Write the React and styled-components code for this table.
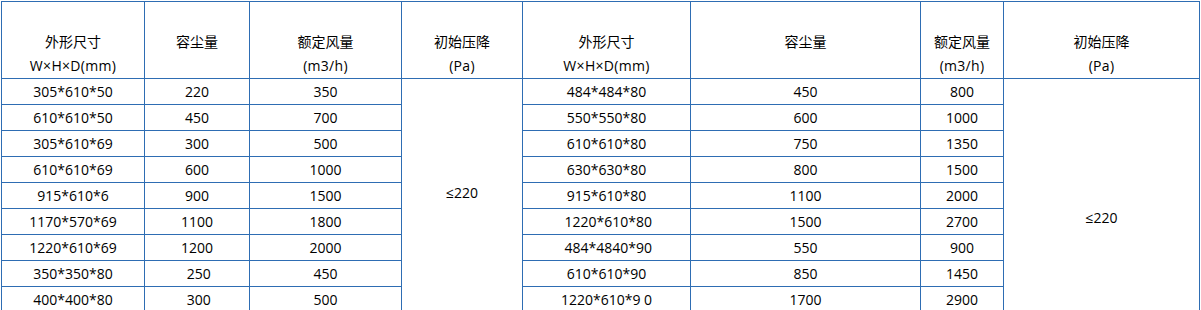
import React from "react";
import styled, { createGlobalStyle } from "styled-components";

const Global = createGlobalStyle`
  html, body { margin: 0; padding: 0; background: #fff; }
  body { font-family: "Open Sans", "Noto Sans CJK SC", sans-serif; }
`;

const LINE = "#2e6db3";

const Table = styled.table`
  margin: 1px 0 0 1px;
  border-collapse: separate;
  border-spacing: 0;
  table-layout: fixed;
  width: 1199px;
  border-left: 1px solid ${LINE};
  border-top: 1px solid ${LINE};
  color: #000;
  font-size: 14px;
`;

const Head = styled.th`
  box-sizing: border-box;
  width: ${(p) => p.$w}px;
  height: 76px;
  padding: 27px 0 0;
  vertical-align: top;
  text-align: center;
  font-weight: normal;
  line-height: 24px;
  border-right: 1px solid ${LINE};
  border-bottom: 1px solid ${LINE};
`;

const Zh = styled.span`
  font-family: "Noto Sans CJK SC", sans-serif;
  font-size: 14px;
`;

const Unit = styled.span`
  letter-spacing: 0.3px;
`;

const Cell = styled.td`
  box-sizing: border-box;
  height: 26px;
  padding: 0;
  text-align: center;
  vertical-align: middle;
  line-height: 25px;
  white-space: pre;
  border-right: 1px solid ${LINE};
  border-bottom: 1px solid ${LINE};
`;

const Merged = styled(Cell)`
  padding: ${(p) => p.$pad};
`;

const heads = [
  { w: 143, zh: "外形尺寸", en: "W×H×D(mm)" },
  { w: 105, zh: "容尘量" },
  { w: 152, zh: "额定风量", en: "(m3/h)" },
  { w: 121, zh: "初始压降", en: "(Pa)" },
  { w: 168, zh: "外形尺寸", en: "W×H×D(mm)" },
  { w: 230, zh: "容尘量" },
  { w: 83, zh: "额定风量", en: "(m3/h)" },
  { w: 196, zh: "初始压降", en: "(Pa)" },
];

const left = [
  ["305*610*50", "220", "350"],
  ["610*610*50", "450", "700"],
  ["305*610*69", "300", "500"],
  ["610*610*69", "600", "1000"],
  ["915*610*6", "900", "1500"],
  ["1170*570*69", "1100", "1800"],
  ["1220*610*69", "1200", "2000"],
  ["350*350*80", " 250", "450"],
  ["400*400*80", " 300", "500"],
];

const right = [
  ["484*484*80", "450", "800"],
  ["550*550*80", "600", "1000"],
  ["610*610*80", "750", "1350"],
  ["630*630*80", "800", "1500"],
  ["915*610*80", "1100", "2000"],
  [" 1220*610*80", "1500", "2700"],
  [" 484*4840*90", "550", "900"],
  ["610*610*90", "850", "1450"],
  ["1220*610*9 0", "1700", "2900"],
];

export default function App() {
  return (
    <>
      <Global />
      <Table>
        <thead>
          <tr>
            {heads.map((h, i) => (
              <Head key={i} $w={h.w}>
                <Zh>{h.zh}</Zh>
                {h.en && (
                  <>
                    <br />
                    <Unit>{h.en}</Unit>
                  </>
                )}
              </Head>
            ))}
          </tr>
        </thead>
        <tbody>
          {left.map((l, i) => (
            <tr key={i}>
              {l.map((v, j) => (
                <Cell key={j}>{v}</Cell>
              ))}
              {i === 0 && (
                <Merged rowSpan={left.length} $pad="0 0 6px">
                  ≤220
                </Merged>
              )}
              {right[i].map((v, j) => (
                <Cell key={"r" + j}>{v}</Cell>
              ))}
              {i === 0 && (
                <Merged rowSpan={left.length} $pad="44px 0 0">
                  ≤220
                </Merged>
              )}
            </tr>
          ))}
        </tbody>
      </Table>
    </>
  );
}
